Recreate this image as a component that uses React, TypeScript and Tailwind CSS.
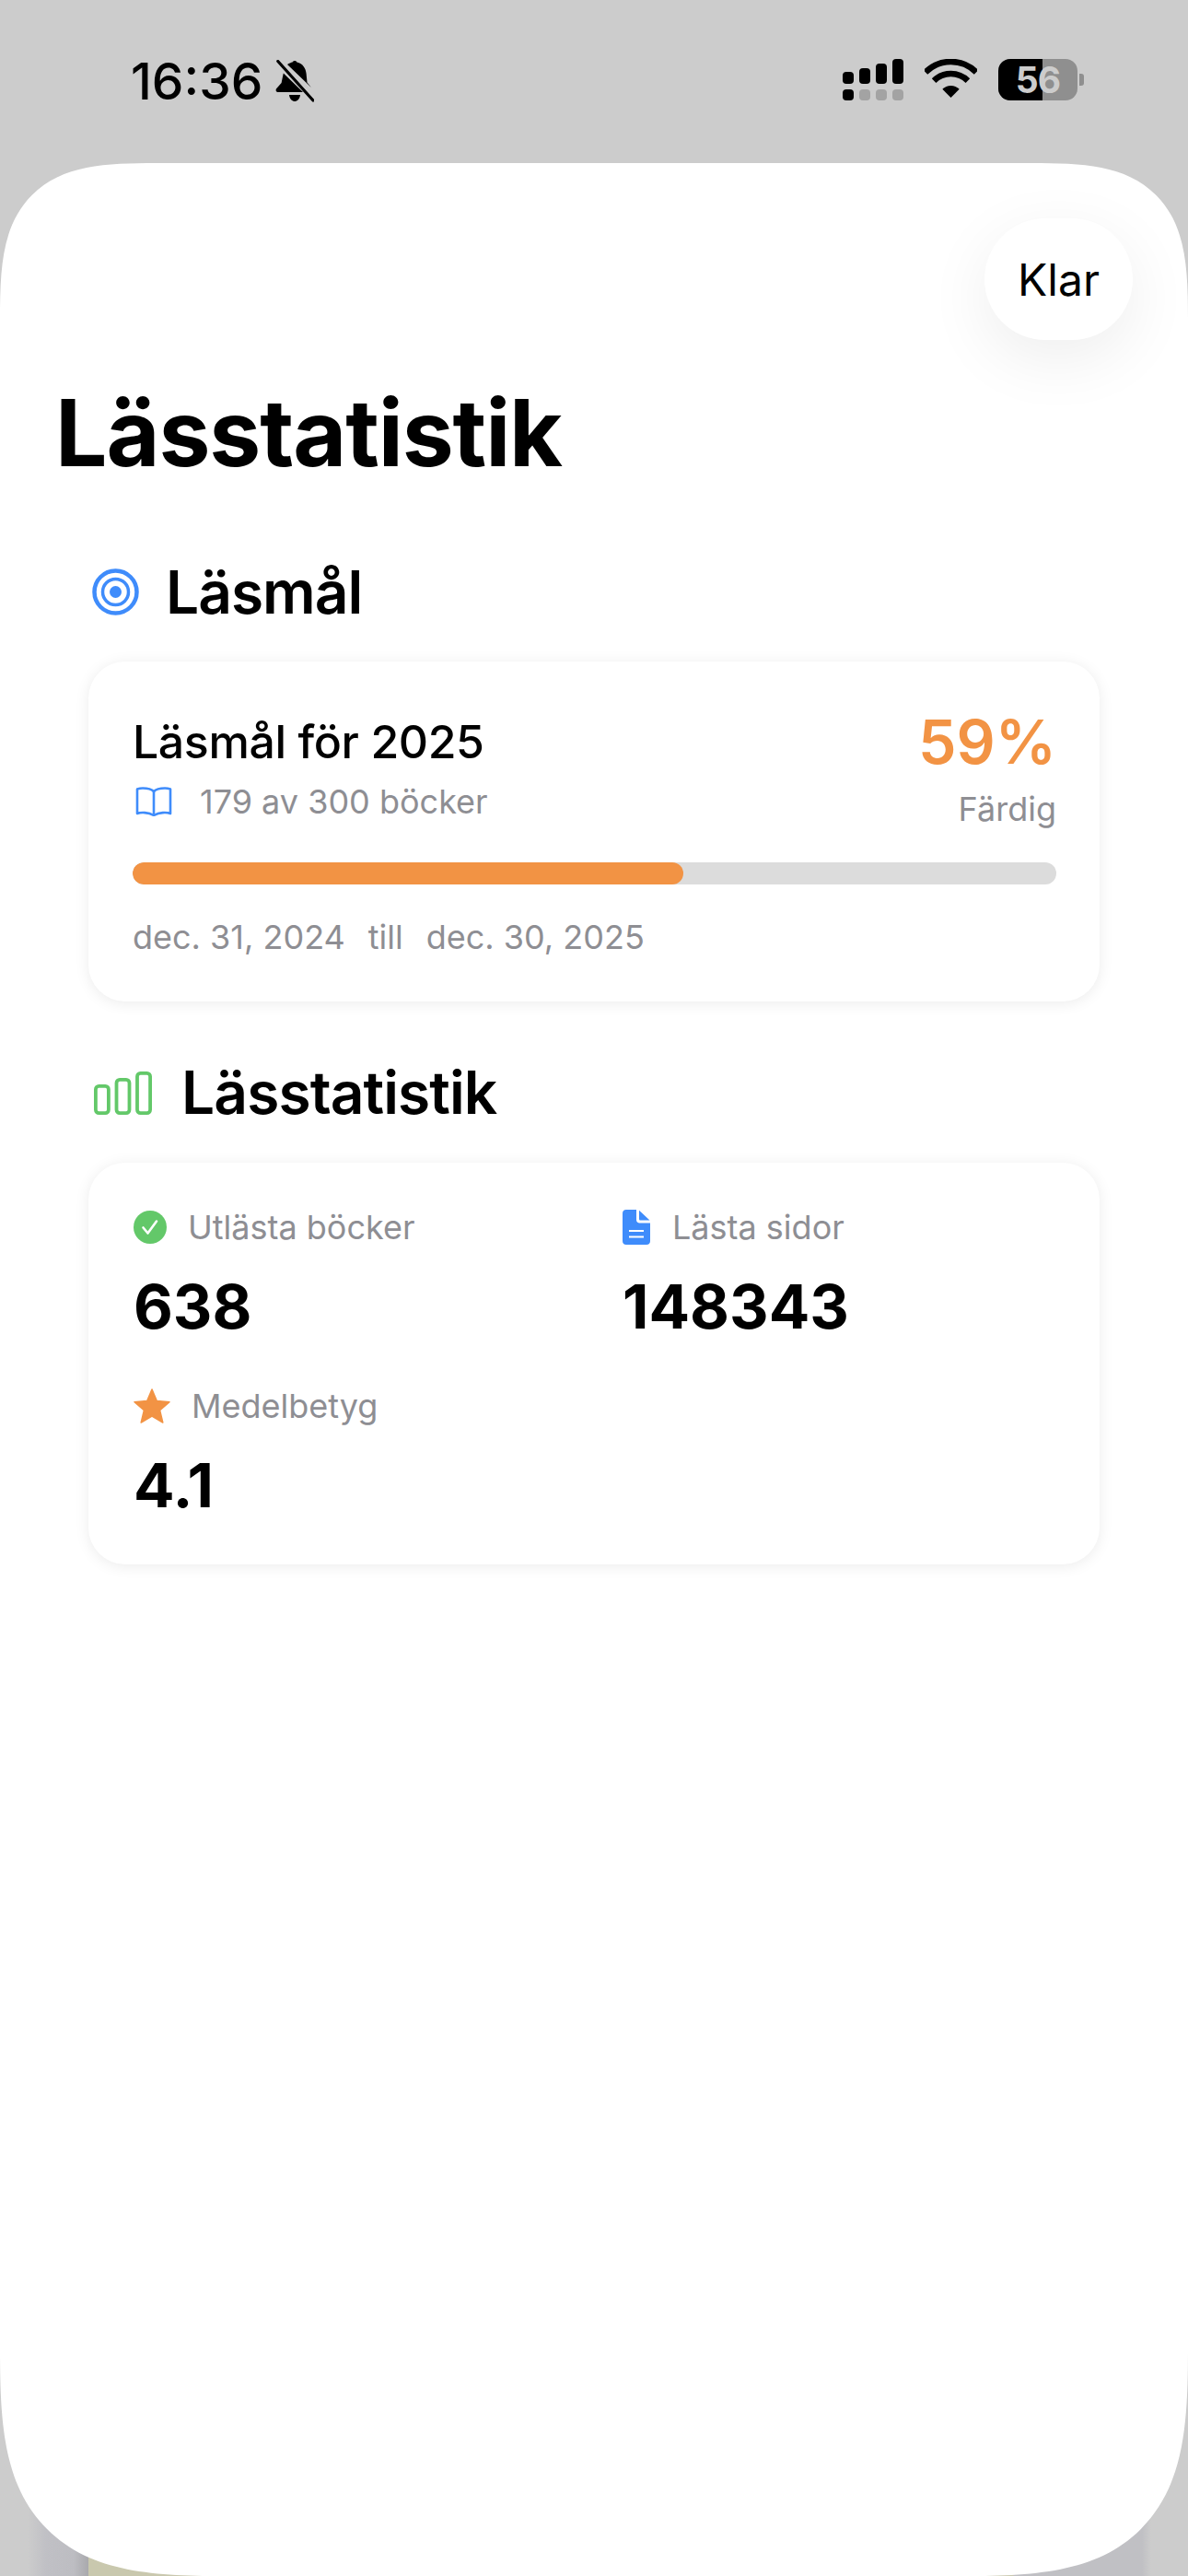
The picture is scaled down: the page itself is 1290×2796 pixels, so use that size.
export default function App() {
  return (
    <div className="relative flex h-[2796px] w-[1290px] flex-col overflow-hidden bg-[#cccccc] font-['Inter',sans-serif] text-black">
      {/* the page behind the sheet only peeks out at the bottom corners */}
      <div className="absolute inset-x-0 bottom-0 h-[120px] bg-[linear-gradient(90deg,#cccccc_0px,#cccccc_30px,#c0c0c5_50px,#bdbdc2_80px,#a9a9ad_96px,#c9c8ae_96px,#c9c8ae_1100px,#c0c0c4_1101px,#c0c0c4_1240px,#cccccc_1250px)]" />

      <StatusBar />

      <div className="relative flex-1 rounded-[170px_170px_250px_250px] bg-white [corner-shape:superellipse(1.6)]">
        <div className="flex justify-end pr-[60px] pt-[60px]">
          <button className="flex h-[132px] w-[161px] items-center justify-center rounded-[66px] bg-white pt-[2px] text-[48px] font-normal shadow-[0_20px_70px_rgba(0,0,0,0.07)]">
            Klar
          </button>
        </div>

        <h1 className="ml-[60px] mt-[41px] text-[100px] font-bold leading-[120px] tracking-[-1.1px]">Lässtatistik</h1>

        <div className="ml-[100px] mt-[80px] flex h-[64px] items-center gap-[29px]">
          <TargetIcon />
          <h2 className="pt-[2px] text-[64px] font-semibold leading-[64px] tracking-[-1px]">Läsmål</h2>
        </div>

        <section className="mx-[96px] mt-[44px] h-[369px] rounded-[40px] bg-white pl-[48px] pr-[47px] pt-[54px] shadow-[0_2px_16px_rgba(0,0,0,0.08)]">
          <div className="flex justify-between">
            <div>
              <div className="mt-[3px] text-[50px] font-medium leading-[60px] tracking-[-0.4px]">Läsmål för 2025</div>
              <div className="mt-[13px] flex h-[44px] items-center gap-[30px] pl-[3px] text-[36px] leading-[44px] text-[#8e8e93]">
                <BookIcon />
                <span>179 av 300 böcker</span>
              </div>
            </div>
            <div className="flex flex-col items-end">
              <div className="-mt-[3px] text-[66px] font-semibold leading-[72px] text-[#f29344]">59%</div>
              <div className="mt-[15px] text-[36px] leading-[44px] text-[#8e8e93]">Färdig</div>
            </div>
          </div>
          <div className="mt-[36px] h-[24px] overflow-hidden rounded-[12px] bg-[#dcdcdc]">
            <div className="h-full w-[598px] rounded-[12px] bg-[#f29344]" />
          </div>
          <div className="mt-[35px] flex gap-[25px] text-[36px] leading-[44px] text-[#8e8e93]">
            <span>dec. 31, 2024</span>
            <span>till</span>
            <span>dec. 30, 2025</span>
          </div>
        </section>

        <div className="ml-[102px] mt-[67px] flex h-[64px] items-center gap-[32px]">
          <ChartIcon />
          <h2 className="text-[64px] font-semibold leading-[64px] tracking-[-0.9px]">Lässtatistik</h2>
        </div>

        <section className="mx-[96px] mt-[44px] grid h-[436px] grid-cols-[531px_1fr] content-start gap-y-[46px] rounded-[40px] bg-white pl-[49px] pt-[48px] shadow-[0_2px_16px_rgba(0,0,0,0.08)]">
          <Stat icon={<CheckIcon />} label="Utlästa böcker" value="638" gap="gap-[23px]" />
          <Stat icon={<DocIcon />} label="Lästa sidor" value="148343" gap="gap-[24px]" />
          <Stat icon={<StarIcon />} label="Medelbetyg" value="4.1" gap="gap-[23px]" />
        </section>
      </div>
    </div>
  )
}

function Stat({ icon, label, value, gap }: { icon: React.ReactNode; label: string; value: string; gap: string }) {
  return (
    <div>
      <div className={`flex h-[44px] items-center ${gap} text-[36px] leading-[44px] text-[#8e8e93]`}>
        {icon}
        <span>{label}</span>
      </div>
      <div className="mt-[24px] text-[66px] font-bold leading-[80px]">{value}</div>
    </div>
  )
}

function StatusBar() {
  return (
    <div className="relative flex h-[177px] shrink-0 items-start justify-between pl-[142px] pr-[113px] pt-[58px]">
      <div className="flex items-center gap-[14px]">
        <span className="text-[55px] font-medium leading-[60px]">16:36</span>
        <BellOffIcon />
      </div>
      <div className="flex items-start gap-[23px] pt-[6px]">
        <SignalIcon />
        <WifiIcon />
        <div className="flex items-center gap-[2px]">
          <div className="relative flex h-[45px] w-[86px] items-center justify-center overflow-hidden rounded-[13px] bg-[#8f8f8f]">
            <div className="absolute inset-y-0 left-0 w-[48px] bg-black" />
            <span className="relative text-[39px] font-bold leading-[45px] tracking-[-1px] text-[#cccccc]">56</span>
          </div>
          <div className="h-[13px] w-[5px] rounded-r-[3px] bg-[#8f8f8f]" />
        </div>
      </div>
    </div>
  )
}

function BellOffIcon() {
  return (
    <svg viewBox="0 0 42 46" className="h-[46px] w-[42px]" fill="black">
      <path d="M13 5C15 3.500 17 2.800 18.600 2.400 19.400 .4 22.600 .4 23.400 2.400 30 4 33 9 33.600 15L34.500 24.500 39 30 13 5Z" />
      <path d="M8.800 14.500 30 35H3C.5 35 0 32.500 1.300 31L6.600 25 8 18Z" />
      <path d="M15 38H27C26.600 42.500 23.500 45 21 45S15.400 42.500 15 38Z" />
      <path d="M2.800 1.500 41 44" stroke="black" strokeWidth="3.200" strokeLinecap="round" />
      <path d="M6.500 .5 42.500 41" stroke="#cccccc" strokeWidth="2.200" />
    </svg>
  )
}

function SignalIcon() {
  const bars = [
    { h: 'h-[13px]', low: 'bg-black' },
    { h: 'h-[17px]', low: 'bg-[#a3a3a3]' },
    { h: 'h-[22px]', low: 'bg-[#a3a3a3]' },
    { h: 'h-[27px]', low: 'bg-[#a3a3a3]' },
  ]
  return (
    <div className="flex h-[45px] gap-[6px]">
      {bars.map((b, i) => (
        <div key={i} className="flex w-[12px] flex-col justify-end gap-[6px]">
          <div className={`${b.h} rounded-[4px] bg-black`} />
          <div className={`h-[12px] rounded-[4px] ${b.low}`} />
        </div>
      ))}
    </div>
  )
}

function WifiIcon() {
  return (
    <svg viewBox="0 0 57 42" className="h-[42px] w-[57px]" fill="none" stroke="black" strokeWidth="6.500">
      <path d="M.9 14.400A39 39 0 0 1 56.100 14.400" />
      <path d="M10.100 23.600A26 26 0 0 1 46.900 23.600" />
      <path d="M19.300 32.800A13 13 0 0 1 37.700 32.800L28.500 42Z" fill="black" stroke="none" />
    </svg>
  )
}

function TargetIcon() {
  return (
    <svg viewBox="0 0 51 51" className="h-[51px] w-[51px]" fill="none" stroke="#3f8cfb">
      <circle cx="25.500" cy="25.500" r="23" strokeWidth="4.500" />
      <circle cx="25.500" cy="25.500" r="14" strokeWidth="3.500" />
      <circle cx="25.500" cy="25.500" r="6.500" fill="#3f8cfb" stroke="none" />
    </svg>
  )
}

function BookIcon() {
  return (
    <svg viewBox="0 0 40 32" className="h-[32px] w-[40px]" fill="none" stroke="#3f8cfb" strokeWidth="2.600" strokeLinejoin="round">
      <path d="M20 5C17 2 13 1.500 8 1.500 6 1.500 4 1.800 2 2.500V29C6 27.500 14 27.500 20 31 26 27.500 34 27.500 38 29V2.500C36 1.800 34 1.500 32 1.500 27 1.500 23 2 20 5Z" />
      <path d="M20 5V30" />
    </svg>
  )
}

function ChartIcon() {
  return (
    <svg viewBox="0 0 63 47" className="h-[47px] w-[63px]" fill="none" stroke="#63c869" strokeWidth="3.800">
      <rect x="1.900" y="15.900" width="14" height="29.200" rx="3.500" />
      <rect x="24.500" y="8.900" width="14" height="36.200" rx="3.500" />
      <rect x="47" y="1.900" width="14.100" height="43.200" rx="3.500" />
    </svg>
  )
}

function CheckIcon() {
  return (
    <svg viewBox="0 0 36 36" className="h-[36px] w-[36px]">
      <circle cx="18" cy="18" r="18" fill="#63c869" />
      <path d="M10.500 18.500 15.500 24.500 25 11.500" fill="none" stroke="white" strokeWidth="2.600" strokeLinecap="round" strokeLinejoin="round" />
    </svg>
  )
}

function DocIcon() {
  return (
    <svg viewBox="0 0 30 38" className="h-[38px] w-[30px]">
      <path d="M4 0H15V11C15 13 16.500 14.500 18.500 14.500H30V34C30 36.500 28.500 38 26 38H4C1.500 38 0 36.500 0 34V4C0 1.500 1.500 0 4 0Z" fill="#3f8cfb" />
      <path d="M18 .8 29.500 11.500H19.500C18.500 11.500 18 11 18 10Z" fill="#3f8cfb" />
      <path d="M7 23H23M7 29.500H23" stroke="white" strokeWidth="2.200" />
    </svg>
  )
}

function StarIcon() {
  return (
    <svg viewBox="0 0 40 38" className="h-[38px] w-[40px]">
      <path d="M20 1 25.300 13.600 39 14.700 28.600 23.700 31.800 37 20 30 8.200 37 11.400 23.700 1 14.700 14.700 13.600Z" fill="#f29344" stroke="#f29344" strokeWidth="1.500" strokeLinejoin="round" />
    </svg>
  )
}
